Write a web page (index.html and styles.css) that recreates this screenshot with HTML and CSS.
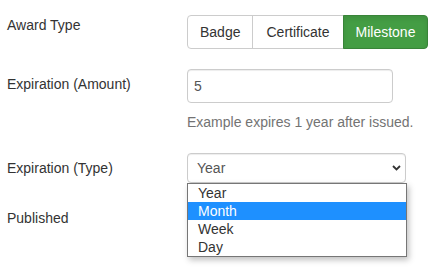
FILE: index.html
```
<!DOCTYPE html>
<html>
<head>
<meta charset="utf-8">
<link rel="stylesheet" href="styles.css">
</head>
<body>
<form class="form">
  <div class="row row-award">
    <div class="label label-award">Award Type</div>
    <div class="control">
      <div class="btn-group">
        <button type="button" class="btn">Badge</button>
        <button type="button" class="btn btn-wide">Certificate</button>
        <button type="button" class="btn btn-active">Milestone</button>
      </div>
    </div>
  </div>
  <div class="row row-amount">
    <div class="label label-amount">Expiration (Amount)</div>
    <div class="control">
      <input class="input" type="text" value="5">
      <div class="help">Example expires 1 year after issued.</div>
    </div>
  </div>
  <div class="row row-type">
    <div class="label label-type">Expiration (Type)</div>
    <div class="control">
      <div class="select-wrap">
        <div class="select">Year</div>
        <svg class="chevron" width="9" height="6" viewBox="0 0 9 6"><path d="M1 1 L4.5 4.5 L8 1" fill="none" stroke="#333" stroke-width="1.8"/></svg>
        <ul class="popup">
          <li class="opt">Year</li>
          <li class="opt opt-hl">Month</li>
          <li class="opt">Week</li>
          <li class="opt">Day</li>
        </ul>
      </div>
    </div>
  </div>
  <div class="row row-published">
    <div class="label">Published</div>
    <div class="control"></div>
  </div>
</form>
</body>
</html>
```
FILE: styles.css
```
html, body {
  margin: 0;
  padding: 0;
  background: #fff;
}
body {
  min-height: 269px;
  font-family: "Liberation Sans", Arial, sans-serif;
  font-size: 14px;
  line-height: 20px;
  color: #333;
}
.form {
  padding: 15px 0 0 7px;
}
.row {
  display: grid;
  grid-template-columns: 180px 1fr;
}
.label {
  color: #333;
}
.row-award {
  margin-bottom: 20px;
}
.label-award {
  padding-top: 0;
}
.btn-group {
  display: flex;
}
.btn {
  font-family: inherit;
  font-size: 14px;
  line-height: 20px;
  padding: 6px 12px;
  border: 1px solid #ccc;
  background: #fff;
  color: #333;
  margin: 0;
  border-radius: 0;
}
.btn-wide {
  padding: 6px 13px;
}
.btn + .btn {
  margin-left: -1px;
}
.btn:first-child {
  border-radius: 4px 0 0 4px;
}
.btn:last-child {
  border-radius: 0 4px 4px 0;
}
.btn-active {
  background: #449d44;
  border-color: #398439;
  color: #fff;
  padding: 6px 12px;
  box-shadow: inset 0 3px 5px rgba(0, 0, 0, 0.08);
}
.row-amount {
  margin-bottom: 21px;
}
.label-amount {
  padding-top: 5px;
}
.input {
  display: block;
  box-sizing: border-box;
  width: 206px;
  height: 34px;
  padding: 6px 6px;
  font-family: inherit;
  font-size: 14px;
  color: #555;
  border: 1px solid #ccc;
  border-radius: 4px;
  box-shadow: inset 0 1px 1px rgba(0, 0, 0, 0.075);
  margin: 0;
}
.help {
  margin-top: 9px;
  color: #737373;
}
.row-type {
  margin-bottom: 25px;
}
.label-type {
  padding-top: 5px;
}
.select-wrap {
  position: relative;
  width: 219px;
}
.select {
  box-sizing: border-box;
  height: 30px;
  padding: 4px 9px;
  color: #555;
  border: 1px solid #ccc;
  border-radius: 4px;
  background: #fff;
  box-shadow: inset 0 1px 1px rgba(0, 0, 0, 0.075);
}
.chevron {
  position: absolute;
  right: 5px;
  top: 12px;
}
.popup {
  position: absolute;
  left: 0;
  top: 30px;
  width: 220px;
  box-sizing: border-box;
  margin: 0;
  padding: 0;
  list-style: none;
  background: #fff;
  border: 1px solid #767676;
  box-shadow: 2px 3px 6px rgba(0, 0, 0, 0.25);
  z-index: 2;
}
.opt {
  height: 18px;
  line-height: 18px;
  padding: 0 10px;
  color: #333;
}
.opt-hl {
  background: #1e90ff;
  color: #fff;
}
```
